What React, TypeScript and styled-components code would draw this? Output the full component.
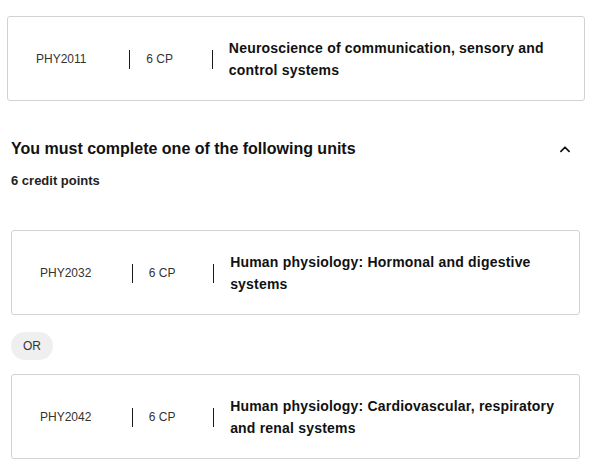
import React from 'react';
import styled, { createGlobalStyle } from 'styled-components';

const GlobalStyle = createGlobalStyle`
  body {
    margin: 0;
    background: #fff;
    font-family: "Liberation Sans", Arial, sans-serif;
    color: #1a1a1a;
  }
`;

interface Unit {
  code: string;
  credits: string;
  title: string;
}

const required: Unit = {
  code: 'PHY2011',
  credits: '6 CP',
  title: 'Neuroscience of communication, sensory and control systems',
};

const options: Unit[] = [
  { code: 'PHY2032', credits: '6 CP', title: 'Human physiology: Hormonal and digestive systems' },
  { code: 'PHY2042', credits: '6 CP', title: 'Human physiology: Cardiovascular, respiratory and renal systems' },
];

const UnitCard = ({ unit }: { unit: Unit }) => (
  <Card>
    <Code>{unit.code}</Code>
    <Divider />
    <Credits>{unit.credits}</Credits>
    <Divider />
    <Title>{unit.title}</Title>
  </Card>
);

const ChevronUp = () => (
  <svg width="14" height="14" viewBox="0 0 24 24" fill="none" stroke="#111" strokeWidth="3" strokeLinecap="round" strokeLinejoin="round">
    <path d="M5 16l7-7 7 7" />
  </svg>
);

const App = () => (
  <>
    <GlobalStyle />
    <Page>
      <UnitCard unit={required} />

      <Group>
        <GroupHeader>
          <Heading>You must complete one of the following units</Heading>
          <Toggle aria-label="Collapse">
            <ChevronUp />
          </Toggle>
        </GroupHeader>
        <Subheading>6 credit points</Subheading>

        <Options>
          <UnitCard unit={options[0]} />
          <OrPill>OR</OrPill>
          <UnitCard unit={options[1]} />
        </Options>
      </Group>
    </Page>
  </>
);

export default App;

const Page = styled.div`
  width: 578px;
  padding: 16px 0 0 7px;
`;

const Card = styled.div`
  display: flex;
  align-items: center;
  border: 1px solid #d2d2d2;
  border-radius: 3px;
  padding: 20px 22px 19px 28px;
  background: #fff;
`;

const Code = styled.div`
  width: 17.75%;
  flex-shrink: 0;
  font-size: 12px;
  color: #333;
`;

const Divider = styled.span`
  width: 1px;
  height: 19px;
  background: #1a1a1a;
  flex-shrink: 0;
  margin-right: 16px;
`;

const Credits = styled.div`
  width: 12.45%;
  flex-shrink: 0;
  font-size: 12px;
  color: #333;
`;

const Title = styled.div`
  font-size: 14px;
  font-weight: bold;
  line-height: 22px;
  letter-spacing: 0.2px;
  color: #111;
`;

const Group = styled.section`
  padding: 0 5px 0 4px;
  margin-top: 36px;
`;

const GroupHeader = styled.div`
  display: flex;
  align-items: center;
  justify-content: space-between;
`;

const Heading = styled.h2`
  margin: 0;
  font-size: 16px;
  line-height: 24px;
  font-weight: bold;
  color: #111;
`;

const Toggle = styled.button`
  border: 0;
  background: none;
  padding: 0;
  margin-right: 8px;
  display: flex;
  cursor: pointer;
`;

const Subheading = styled.div`
  margin-top: 11px;
  font-size: 13px;
  line-height: 18px;
  font-weight: bold;
  color: #222;
`;

const Options = styled.div`
  display: flex;
  flex-direction: column;
  align-items: stretch;
  margin-top: 40px;
`;

const OrPill = styled.div`
  align-self: flex-start;
  width: 42px;
  height: 28px;
  margin: 17px 0 14px;
  border-radius: 14px;
  background: #efefef;
  color: #333;
  font-size: 12px;
  display: flex;
  align-items: center;
  justify-content: center;
`;
